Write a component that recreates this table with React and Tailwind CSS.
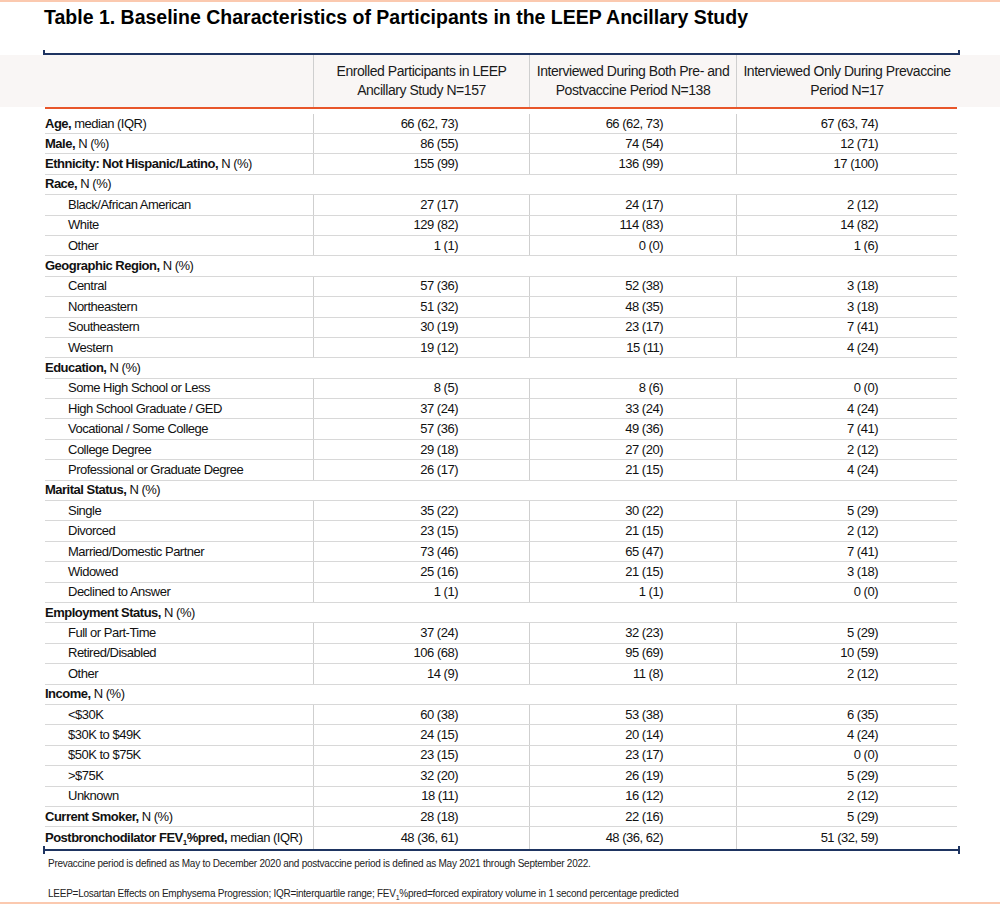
import React from "react";

const cols = "grid grid-cols-[268px_216px_207px_221px]";

const rows = [
  { b: "Age,", n: " median (IQR)", v: ["66 (62, 73)", "66 (62, 73)", "67 (63, 74)"], first: true },
  { b: "Male,", n: " N (%)", v: ["86 (55)", "74 (54)", "12 (71)"] },
  { b: "Ethnicity: Not Hispanic/Latino,", n: " N (%)", v: ["155 (99)", "136 (99)", "17 (100)"] },
  { b: "Race,", n: " N (%)", section: true },
  { s: "Black/African American", v: ["27 (17)", "24 (17)", "2 (12)"] },
  { s: "White", v: ["129 (82)", "114 (83)", "14 (82)"] },
  { s: "Other", v: ["1 (1)", "0 (0)", "1 (6)"] },
  { b: "Geographic Region,", n: " N (%)", section: true },
  { s: "Central", v: ["57 (36)", "52 (38)", "3 (18)"] },
  { s: "Northeastern", v: ["51 (32)", "48 (35)", "3 (18)"] },
  { s: "Southeastern", v: ["30 (19)", "23 (17)", "7 (41)"] },
  { s: "Western", v: ["19 (12)", "15 (11)", "4 (24)"] },
  { b: "Education,", n: " N (%)", section: true },
  { s: "Some High School or Less", v: ["8 (5)", "8 (6)", "0 (0)"] },
  { s: "High School Graduate / GED", v: ["37 (24)", "33 (24)", "4 (24)"] },
  { s: "Vocational / Some College", v: ["57 (36)", "49 (36)", "7 (41)"] },
  { s: "College Degree", v: ["29 (18)", "27 (20)", "2 (12)"] },
  { s: "Professional or Graduate Degree", v: ["26 (17)", "21 (15)", "4 (24)"] },
  { b: "Marital Status,", n: " N (%)", section: true },
  { s: "Single", v: ["35 (22)", "30 (22)", "5 (29)"] },
  { s: "Divorced", v: ["23 (15)", "21 (15)", "2 (12)"] },
  { s: "Married/Domestic Partner", v: ["73 (46)", "65 (47)", "7 (41)"] },
  { s: "Widowed", v: ["25 (16)", "21 (15)", "3 (18)"] },
  { s: "Declined to Answer", v: ["1 (1)", "1 (1)", "0 (0)"] },
  { b: "Employment Status,", n: " N (%)", section: true },
  { s: "Full or Part-Time", v: ["37 (24)", "32 (23)", "5 (29)"] },
  { s: "Retired/Disabled", v: ["106 (68)", "95 (69)", "10 (59)"] },
  { s: "Other", v: ["14 (9)", "11 (8)", "2 (12)"] },
  { b: "Income,", n: " N (%)", section: true },
  { s: "<$30K", v: ["60 (38)", "53 (38)", "6 (35)"] },
  { s: "$30K to $49K", v: ["24 (15)", "20 (14)", "4 (24)"] },
  { s: "$50K to $75K", v: ["23 (15)", "23 (17)", "0 (0)"] },
  { s: ">$75K", v: ["32 (20)", "26 (19)", "5 (29)"] },
  { s: "Unknown", v: ["18 (11)", "16 (12)", "2 (12)"] },
  { b: "Current Smoker,", n: " N (%)", v: ["28 (18)", "22 (16)", "5 (29)"] },
  { fev: true, v: ["48 (36, 61)", "48 (36, 62)", "51 (32, 59)"], last: true },
];

const valPad = ["pr-[71px]", "pr-[73px]", "pr-[79px]"];

const NavyRule = () => (
  <div className="ml-[43px] w-[917px] h-[2px] flex items-center">
    <div className="w-[2px] h-[8px] bg-[#1e3461]" />
    <div className="flex-1 h-[2px] bg-[#1e3461]" />
    <div className="w-[2px] h-[8px] bg-[#1e3461]" />
  </div>
);

const Label = ({ r }) => {
  if (r.fev)
    return (
      <span className="whitespace-nowrap">
        <b>
          Postbronchodilator FEV<sub className="text-[8px] align-[-1px]">1</sub>%pred,
        </b>{" "}
        median (IQR)
      </span>
    );
  if (r.s) return <span className="pl-[23px]">{r.s}</span>;
  return (
    <span className="whitespace-nowrap">
      <b>{r.b}</b>
      {r.n}
    </span>
  );
};

export default function App() {
  return (
    <div className="w-[1000px] h-[905px] bg-white text-[#111] flex flex-col font-['Liberation_Sans',Arial,sans-serif]">
      <div className="h-[2px] bg-[#fbc9af]" />

      {/* TITLE */}
      <div className="h-[51px] pt-[5px] pl-[44px]">
        <h1 className="text-[19.5px] leading-[20px] font-bold text-black">
          Table 1. Baseline Characteristics of Participants in the LEEP Ancillary Study
        </h1>
      </div>

      <NavyRule />

      {/* HEADER */}
      <div className="bg-[#f9f6f5] h-[52px]">
        <div className={`${cols} ml-[45px] h-full text-[14px] leading-[19px] text-[#1a1a1a] tracking-[-0.45px]`}>
          <div />
          <div className="border-l border-[#cfcfcf] flex items-center justify-center text-center">
            <p>
              Enrolled Participants in LEEP
              <br />
              Ancillary Study N=157
            </p>
          </div>
          <div className="border-l border-[#cfcfcf] flex items-center justify-center text-center">
            <p>
              Interviewed During Both Pre- and
              <br />
              Postvaccine Period N=138
            </p>
          </div>
          <div className="border-l border-[#cfcfcf] flex items-center justify-center text-center">
            <p>
              Interviewed Only During Prevaccine
              <br />
              Period N=17
            </p>
          </div>
        </div>
      </div>
      <div className="ml-[45px] w-[912px] h-[2px] bg-[#e8562a]" />

      {/* BODY */}
      <div className="ml-[45px] w-[912px] text-[13px] leading-[16px] tracking-[-0.5px]">
        {rows.map((r, i) =>
          r.section ? (
            <div key={i} className="h-[20.4px] flex items-center border-b border-[#d8d8d8]">
              <Label r={r} />
            </div>
          ) : (
            <div
              key={i}
              className={`${cols} ${r.first ? "h-[25px] pt-[5px]" : r.last ? "h-[22px]" : "h-[20.4px]"} ${
                r.last ? "" : "border-b border-[#d8d8d8]"
              }`}
            >
              <div className="flex items-center">
                <Label r={r} />
              </div>
              {r.v.map((v, j) => (
                <div key={j} className={`border-l border-[#cfcfcf] flex items-center justify-end ${valPad[j]}`}>
                  {v}
                </div>
              ))}
            </div>
          )
        )}
      </div>

      <NavyRule />

      {/* FOOTNOTES */}
      <div className="pl-[48px] text-[10px] leading-[14px] text-[#222] tracking-[-0.25px]">
        <p className="mt-[6px]">
          Prevaccine period is defined as May to December 2020 and postvaccine period is defined as May 2021 through
          September 2022.
        </p>
        <p className="mt-[16px]">
          LEEP=Losartan Effects on Emphysema Progression; IQR=interquartile range; FEV
          <sub className="text-[7px] align-[-1px]">1</sub>%pred=forced expiratory volume in 1 second percentage
          predicted
        </p>
      </div>

      <div className="flex-1" />
      <div className="h-[2px] bg-[#fbc9af] mb-[1px]" />
    </div>
  );
}
